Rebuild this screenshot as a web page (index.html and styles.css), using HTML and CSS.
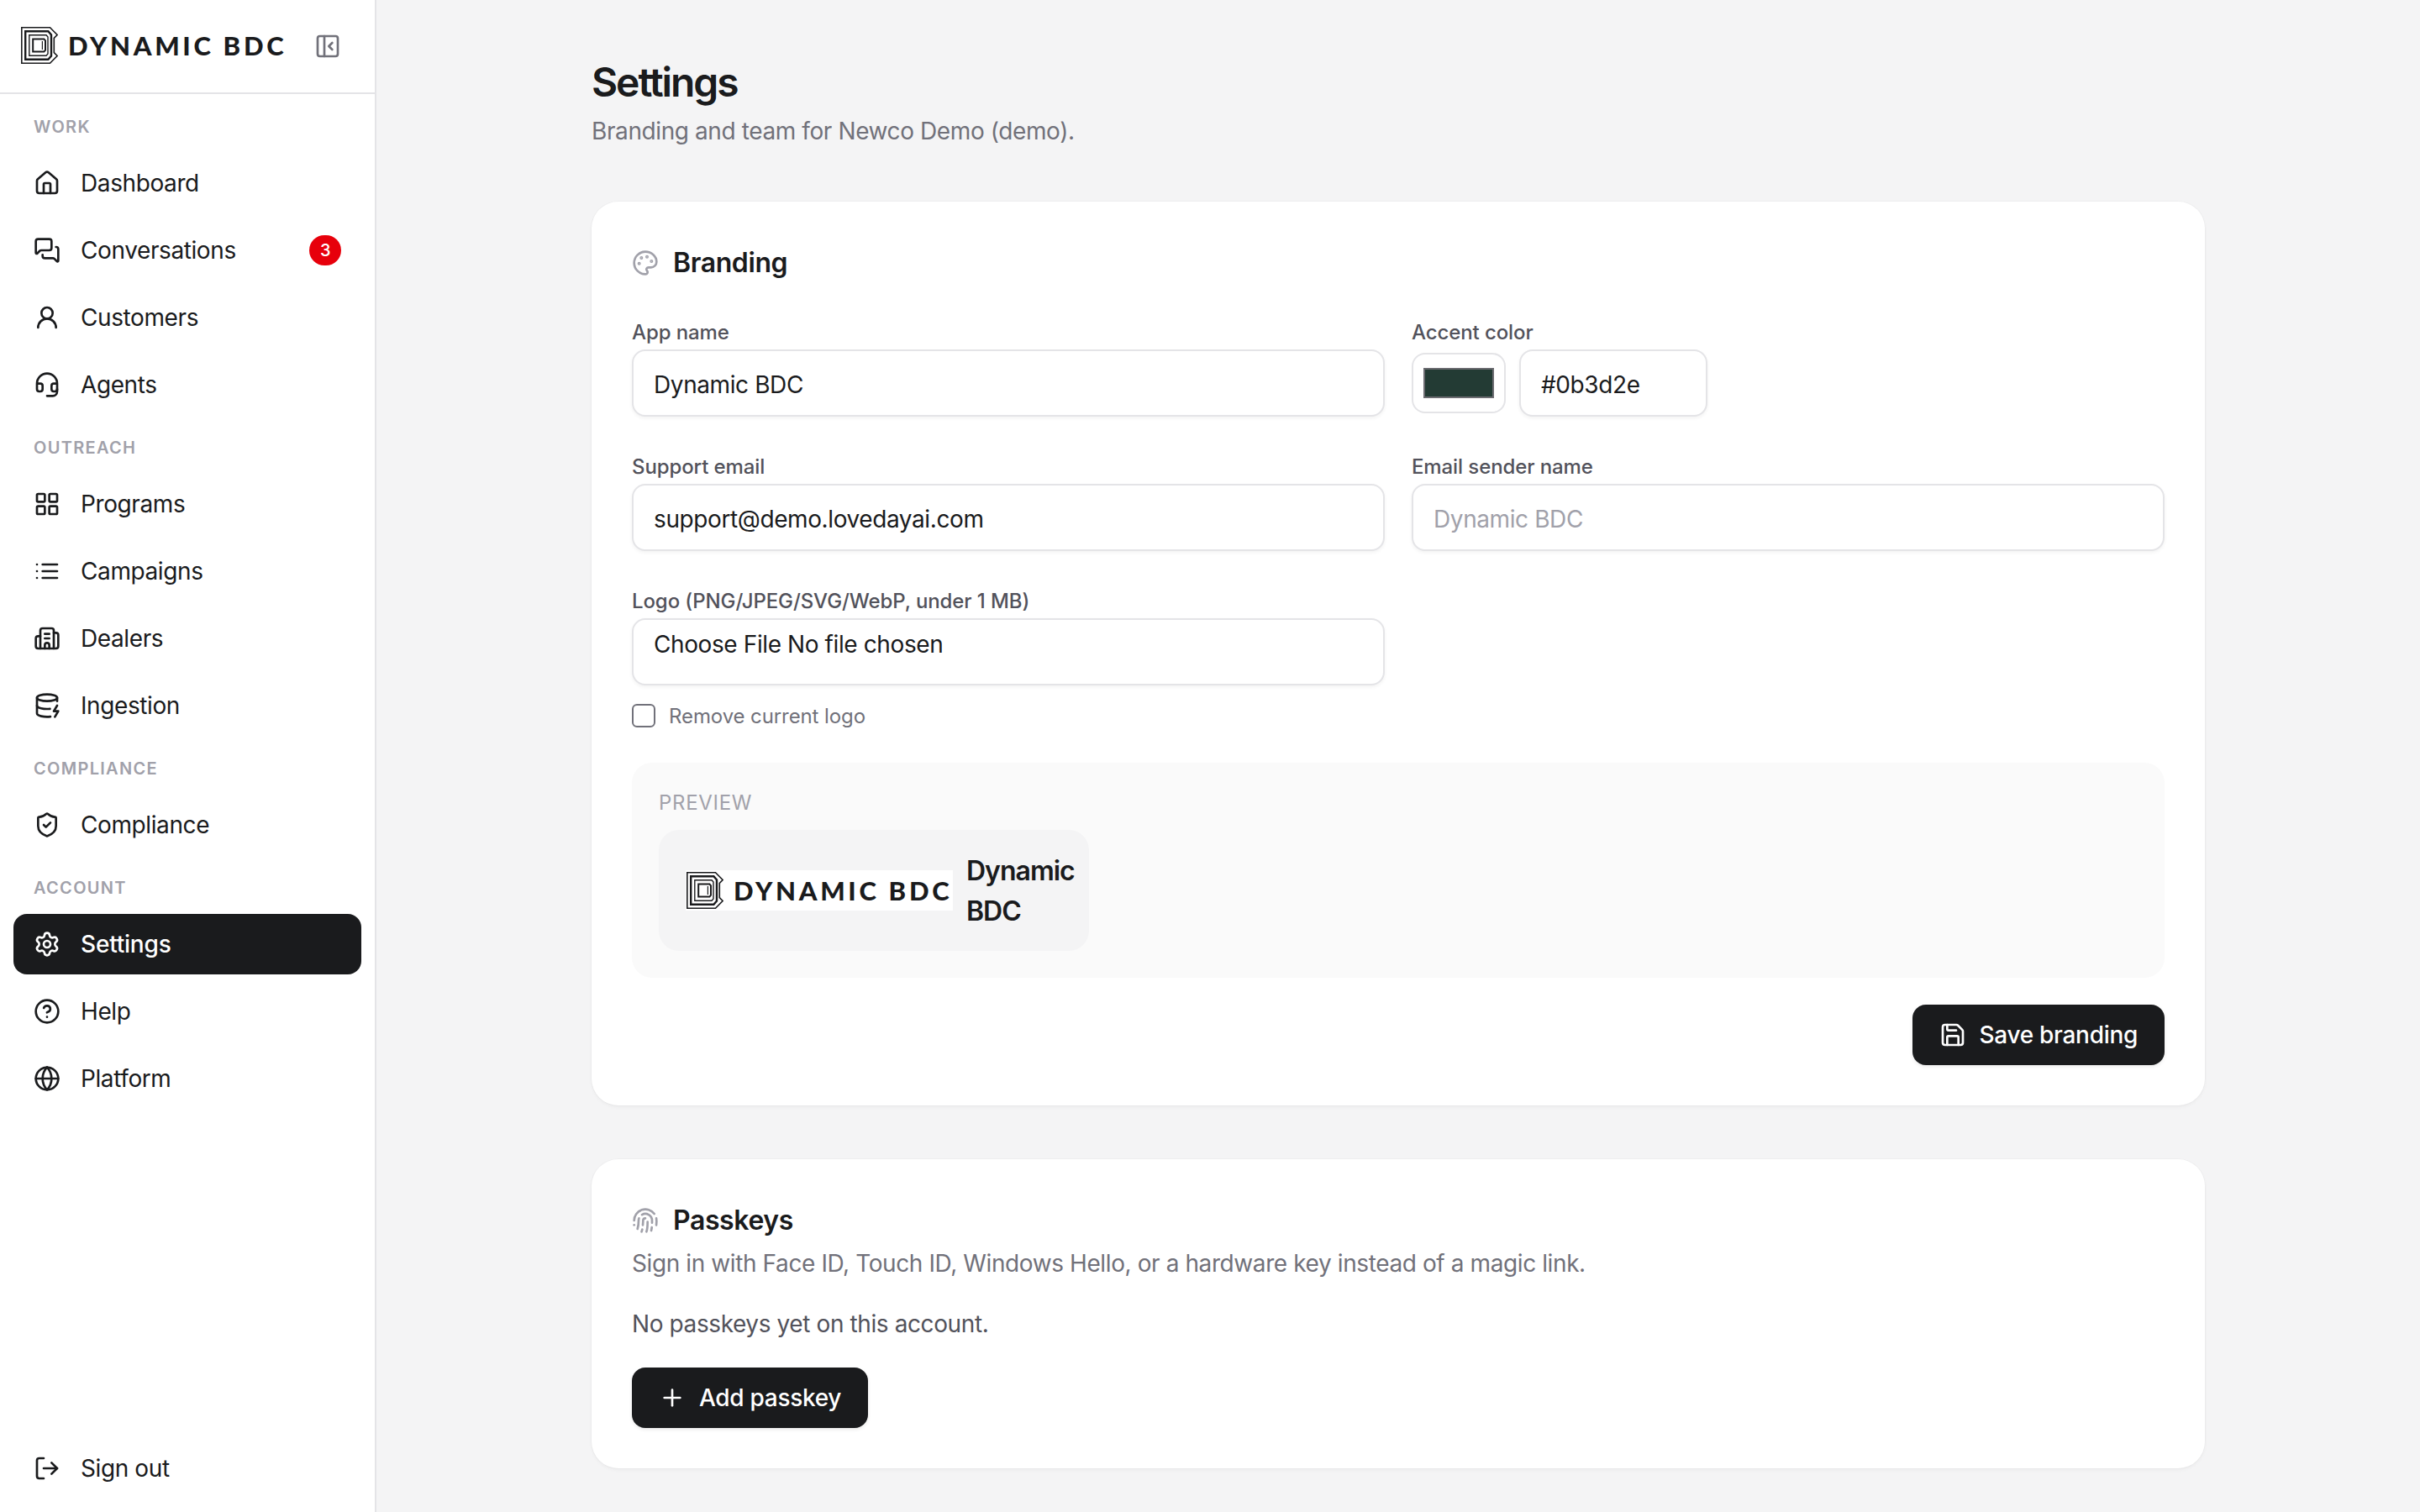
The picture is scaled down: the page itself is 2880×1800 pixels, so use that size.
FILE: index.html
```html
<!DOCTYPE html>
<html lang="en">
	<head>
		<meta charset="UTF-8" />
		<meta name="viewport" content="width=device-width, initial-scale=1.0" />
		<title>Settings</title>
		<link rel="stylesheet" href="styles.css">
	</head>
	<body>
		<!-- Icons -->
		<svg class="sprite" xmlns="http://www.w3.org/2000/svg">
			<symbol id="i-logo" viewBox="0 0 44 44">
				<path d="M.8 .8H34.5L43.1 9.5L39.3 13.4V30.6L43.1 34.5L34.5 43.2H.8Z" stroke-width="1.6" />
				<path d="M5.2 5.2H32.4L36 9.4V34.6L32.4 38.8H5.2Z" stroke-width="2.4" />
				<path d="M9.8 9.8H30L32 12V32L30 34.2H9.8Z" stroke-width="1.4" />
				<path d="M14.2 14.4H27.4L29 16.4V27.6L27.4 29.6H14.2Z" stroke-width="2" />
				<path d="M25.4 17V27" stroke-width="1.2" />
			</symbol>
			<symbol id="i-panel" viewBox="0 0 24 24">
				<rect width="18" height="18" x="3" y="3" rx="2" /><path d="M9 3v18" /><path d="m16 15-3-3 3-3" />
			</symbol>
			<symbol id="i-house" viewBox="0 0 24 24">
				<path d="M15 21v-8a1 1 0 0 0-1-1h-4a1 1 0 0 0-1 1v8" />
				<path d="M3 10a2 2 0 0 1 .709-1.528l7-5.999a2 2 0 0 1 2.582 0l7 5.999A2 2 0 0 1 21 10v9a2 2 0 0 1-2 2H5a2 2 0 0 1-2-2z" />
			</symbol>
			<symbol id="i-messages" viewBox="0 0 24 24">
				<path d="M16 10a2 2 0 0 1-2 2H6.828a2 2 0 0 0-1.414.586l-2.202 2.202A.71.71 0 0 1 2 14.286V4a2 2 0 0 1 2-2h10a2 2 0 0 1 2 2z" />
				<path d="M20 9a2 2 0 0 1 2 2v10.286a.71.71 0 0 1-1.212.502l-2.202-2.202A2 2 0 0 0 17.172 19H10a2 2 0 0 1-2-2v-1" />
			</symbol>
			<symbol id="i-user" viewBox="0 0 24 24">
				<circle cx="12" cy="8" r="5" /><path d="M20 21a8 8 0 0 0-16 0" />
			</symbol>
			<symbol id="i-headset" viewBox="0 0 24 24">
				<path d="M3 11h3a2 2 0 0 1 2 2v3a2 2 0 0 1-2 2H5a2 2 0 0 1-2-2v-5Zm0 0a9 9 0 1 1 18 0m0 0v5a2 2 0 0 1-2 2h-1a2 2 0 0 1-2-2v-3a2 2 0 0 1 2-2h3Z" />
				<path d="M21 16v2a4 4 0 0 1-4 4h-5" />
			</symbol>
			<symbol id="i-grid" viewBox="0 0 24 24">
				<rect width="7" height="7" x="3" y="3" rx="1" /><rect width="7" height="7" x="14" y="3" rx="1" />
				<rect width="7" height="7" x="14" y="14" rx="1" /><rect width="7" height="7" x="3" y="14" rx="1" />
			</symbol>
			<symbol id="i-list" viewBox="0 0 24 24">
				<path d="M3 12h.01" /><path d="M3 18h.01" /><path d="M3 6h.01" /><path d="M8 12h13" /><path d="M8 18h13" /><path d="M8 6h13" />
			</symbol>
			<symbol id="i-building" viewBox="0 0 24 24">
				<path d="M10 12h4" /><path d="M10 8h4" /><path d="M14 21v-3a2 2 0 0 0-4 0v3" />
				<path d="M6 10H4a2 2 0 0 0-2 2v7a2 2 0 0 0 2 2h16a2 2 0 0 0 2-2V9a2 2 0 0 0-2-2h-2" />
				<path d="M6 21V5a2 2 0 0 1 2-2h8a2 2 0 0 1 2 2v16" />
			</symbol>
			<symbol id="i-database" viewBox="0 0 24 24">
				<ellipse cx="12" cy="5" rx="9" ry="3" /><path d="M3 5V19A9 3 0 0 0 15 21.84" /><path d="M21 5V8" />
				<path d="M21 12L18 17H22L19 22" /><path d="M3 12A9 3 0 0 0 14.59 14.87" />
			</symbol>
			<symbol id="i-shield" viewBox="0 0 24 24">
				<path d="M20 13c0 5-3.5 7.5-7.66 8.95a1 1 0 0 1-.67-.01C7.5 20.5 4 18 4 13V6a1 1 0 0 1 1-1c2 0 4.5-1.2 6.24-2.72a1.17 1.17 0 0 1 1.52 0C14.51 3.81 17 5 19 5a1 1 0 0 1 1 1z" />
				<path d="m9 12 2 2 4-4" />
			</symbol>
			<symbol id="i-settings" viewBox="0 0 24 24">
				<path d="M9.671 4.136a2.34 2.34 0 0 1 4.659 0 2.34 2.34 0 0 0 3.319 1.915 2.34 2.34 0 0 1 2.33 4.033 2.34 2.34 0 0 0 0 3.831 2.34 2.34 0 0 1-2.33 4.033 2.34 2.34 0 0 0-3.319 1.915 2.34 2.34 0 0 1-4.659 0 2.34 2.34 0 0 0-3.32-1.915 2.34 2.34 0 0 1-2.33-4.033 2.34 2.34 0 0 0 0-3.831A2.34 2.34 0 0 1 6.35 6.051a2.34 2.34 0 0 0 3.319-1.915" />
				<circle cx="12" cy="12" r="3" />
			</symbol>
			<symbol id="i-help" viewBox="0 0 24 24">
				<circle cx="12" cy="12" r="10" /><path d="M9.09 9a3 3 0 0 1 5.83 1c0 2-3 3-3 3" /><path d="M12 17h.01" />
			</symbol>
			<symbol id="i-globe" viewBox="0 0 24 24">
				<circle cx="12" cy="12" r="10" /><path d="M12 2a14.5 14.5 0 0 0 0 20 14.5 14.5 0 0 0 0-20" /><path d="M2 12h20" />
			</symbol>
			<symbol id="i-logout" viewBox="0 0 24 24">
				<path d="m16 17 5-5-5-5" /><path d="M21 12H9" /><path d="M9 21H5a2 2 0 0 1-2-2V5a2 2 0 0 1 2-2h4" />
			</symbol>
			<symbol id="i-palette" viewBox="0 0 24 24">
				<path d="M12 22a1 1 0 0 1 0-20 10 9 0 0 1 10 9 5 5 0 0 1-5 5h-2.25a1.75 1.75 0 0 0-1.4 2.8l.3.4a1.75 1.75 0 0 1-1.4 2.8z" />
				<circle cx="13.5" cy="6.5" r=".5" fill="currentColor" /><circle cx="17.5" cy="10.5" r=".5" fill="currentColor" />
				<circle cx="6.5" cy="12.5" r=".5" fill="currentColor" /><circle cx="8.5" cy="7.5" r=".5" fill="currentColor" />
			</symbol>
			<symbol id="i-fingerprint" viewBox="0 0 24 24">
				<path d="M12 10a2 2 0 0 0-2 2c0 1.02-.1 2.51-.26 4" /><path d="M14 13.12c0 2.38 0 6.38-1 8.88" />
				<path d="M17.29 21.02c.12-.6.43-2.3.5-3.02" /><path d="M2 12a10 10 0 0 1 18-6" /><path d="M2 16h.01" />
				<path d="M21.8 16c.2-2 .131-5.354 0-6" /><path d="M5 19.5C5.5 18 6 15 6 12a6 6 0 0 1 .34-2" />
				<path d="M8.65 22c.21-.66.45-1.32.57-2" /><path d="M9 6.8a6 6 0 0 1 9 5.2v2" />
			</symbol>
			<symbol id="i-save" viewBox="0 0 24 24">
				<path d="M15.2 3a2 2 0 0 1 1.4.6l3.8 3.8a2 2 0 0 1 .6 1.4V19a2 2 0 0 1-2 2H5a2 2 0 0 1-2-2V5a2 2 0 0 1 2-2z" />
				<path d="M17 21v-7a1 1 0 0 0-1-1H8a1 1 0 0 0-1 1v7" /><path d="M7 3v4a1 1 0 0 0 1 1h7" />
			</symbol>
			<symbol id="i-plus" viewBox="0 0 24 24">
				<path d="M5 12h14" /><path d="M12 5v14" />
			</symbol>
		</svg>

		<!-- Sidebar: Begin -->
		<aside class="sidebar">
			<div class="sidebar-head">
				<div class="logo">
					<svg class="logo-mark"><use href="#i-logo" /></svg>
					<span class="logo-word">DYNAMIC BDC</span>
				</div>
				<button type="button" class="collapse"><svg class="icon"><use href="#i-panel" /></svg></button>
			</div>
			<nav class="nav">
				<div class="nav-group">
					<div class="nav-label">WORK</div>
					<a class="nav-item"><svg class="icon"><use href="#i-house" /></svg>Dashboard</a>
					<a class="nav-item"><svg class="icon"><use href="#i-messages" /></svg>Conversations<span class="badge">3</span></a>
					<a class="nav-item"><svg class="icon"><use href="#i-user" /></svg>Customers</a>
					<a class="nav-item"><svg class="icon"><use href="#i-headset" /></svg>Agents</a>
				</div>
				<div class="nav-group">
					<div class="nav-label">OUTREACH</div>
					<a class="nav-item"><svg class="icon"><use href="#i-grid" /></svg>Programs</a>
					<a class="nav-item"><svg class="icon"><use href="#i-list" /></svg>Campaigns</a>
					<a class="nav-item"><svg class="icon"><use href="#i-building" /></svg>Dealers</a>
					<a class="nav-item"><svg class="icon"><use href="#i-database" /></svg>Ingestion</a>
				</div>
				<div class="nav-group">
					<div class="nav-label">COMPLIANCE</div>
					<a class="nav-item"><svg class="icon"><use href="#i-shield" /></svg>Compliance</a>
				</div>
				<div class="nav-group">
					<div class="nav-label">ACCOUNT</div>
					<a class="nav-item active"><svg class="icon"><use href="#i-settings" /></svg>Settings</a>
					<a class="nav-item"><svg class="icon"><use href="#i-help" /></svg>Help</a>
					<a class="nav-item"><svg class="icon"><use href="#i-globe" /></svg>Platform</a>
				</div>
			</nav>
			<div class="sidebar-foot">
				<a class="nav-item"><svg class="icon"><use href="#i-logout" /></svg>Sign out</a>
			</div>
		</aside>
		<!-- Sidebar: End -->

		<main class="main">
			<header class="page-head">
				<h1>Settings</h1>
				<p class="page-sub">Branding and team for Newco Demo (demo).</p>
			</header>

			<!-- Branding: Begin -->
			<section class="card">
				<h2 class="card-title"><svg class="icon muted"><use href="#i-palette" /></svg>Branding</h2>
				<div class="form-grid">
					<div class="field">
						<label>App name</label>
						<input class="input" type="text" value="Dynamic BDC" />
					</div>
					<div class="field">
						<label>Accent color</label>
						<div class="color-row">
							<input class="color" type="color" value="#233b34" />
							<input class="input hex" type="text" value="#0b3d2e" />
						</div>
					</div>
					<div class="field">
						<label>Support email</label>
						<input class="input" type="text" value="support@demo.lovedayai.com" />
					</div>
					<div class="field">
						<label>Email sender name</label>
						<input class="input" type="text" placeholder="Dynamic BDC" />
					</div>
					<div class="field">
						<label>Logo (PNG/JPEG/SVG/WebP, under 1 MB)</label>
						<div class="input file">Choose File No file chosen</div>
					</div>
				</div>
				<label class="check"><input type="checkbox" />Remove current logo</label>
				<div class="preview">
					<div class="preview-label">PREVIEW</div>
					<div class="preview-box">
						<div class="logo logo-white">
							<svg class="logo-mark"><use href="#i-logo" /></svg>
							<span class="logo-word">DYNAMIC BDC</span>
						</div>
						<span class="preview-name">Dynamic BDC</span>
					</div>
				</div>
				<div class="card-actions">
					<button type="button" class="btn"><svg class="icon"><use href="#i-save" /></svg>Save branding</button>
				</div>
			</section>
			<!-- Branding: End -->

			<!-- Passkeys: Begin -->
			<section class="card">
				<h2 class="card-title"><svg class="icon muted"><use href="#i-fingerprint" /></svg>Passkeys</h2>
				<p class="card-sub">Sign in with Face ID, Touch ID, Windows Hello, or a hardware key instead of a magic link.</p>
				<p class="card-note">No passkeys yet on this account.</p>
				<button type="button" class="btn"><svg class="icon"><use href="#i-plus" /></svg>Add passkey</button>
			</section>
			<!-- Passkeys: End -->
		</main>
	</body>
</html>
```

FILE: styles.css
```css
* {
	box-sizing: border-box;
}

html,
body {
	margin: 0;
	height: 100%;
}

body {
	display: flex;
	overflow: hidden;
	background-color: #f4f4f5;
	color: #1a1b1d;
	font-family: "Inter", "Liberation Sans", sans-serif;
	font-size: 28px;
	letter-spacing: -0.4px;
}

.sprite {
	display: none;
}

.icon {
	flex: none;
	width: 32px;
	height: 32px;
	fill: none;
	stroke: currentColor;
	stroke-width: 2;
	stroke-linecap: round;
	stroke-linejoin: round;
}

.icon.muted {
	color: #a1a1aa;
}

/* Sidebar */
.sidebar {
	flex: none;
	display: flex;
	flex-direction: column;
	width: 448px;
	height: 100%;
	background-color: #fff;
	border-right: 2px solid #e4e4e7;
}

.sidebar-head {
	display: flex;
	align-items: center;
	justify-content: space-between;
	height: 112px;
	padding: 0 40px 2px 24px;
	border-bottom: 2px solid #e4e4e7;
}

.logo {
	display: flex;
	align-items: center;
	gap: 12px;
	width: 318px;
	height: 48px;
}

.logo-white {
	flex: none;
	background-color: #fff;
}

.logo-mark {
	flex: none;
	width: 44px;
	height: 44px;
	margin-left: 1px;
	fill: none;
	stroke: #1a1b1d;
	stroke-linejoin: miter;
}

.logo-word {
	font-family: "Lato", "Liberation Sans", sans-serif;
	font-size: 31px;
	font-weight: 900;
	letter-spacing: 3.7px;
	white-space: nowrap;
	color: #1a1b1d;
}

.collapse {
	display: flex;
	margin-top: 2px;
	padding: 0;
	border: 0;
	background: none;
	color: #71717a;
}

.nav {
	flex: 1;
	display: flex;
	flex-direction: column;
	gap: 24px;
	padding: 24px 16px 0;
}

.nav-group {
	display: flex;
	flex-direction: column;
	gap: 8px;
}

.nav-label {
	margin-bottom: 8px;
	padding-left: 24px;
	font-size: 20px;
	font-weight: 600;
	line-height: 30px;
	letter-spacing: 1.3px;
	color: #a1a1aa;
}

.nav-item {
	display: flex;
	align-items: center;
	gap: 24px;
	height: 72px;
	padding: 0 24px;
	border-radius: 16px;
	color: #1a1b1d;
}

.nav-item.active {
	background-color: #1a1b1d;
	color: #fff;
	font-weight: 500;
	letter-spacing: -0.2px;
}

.badge {
	margin-left: auto;
	width: 38px;
	height: 36px;
	border-radius: 18px;
	background-color: #e7000b;
	color: #fff;
	font-size: 20px;
	font-weight: 500;
	line-height: 36px;
	text-align: center;
}

.sidebar-foot {
	padding: 0 16px 16px;
}

/* Main */
.main {
	flex: 1;
	display: flex;
	flex-direction: column;
	gap: 64px;
	height: 100%;
	padding: 64px 256px 0;
}

h1 {
	margin: 0;
	font-size: 48px;
	font-weight: 600;
	line-height: 68px;
	letter-spacing: -2.1px;
}

.page-sub {
	margin: 4px 0 0;
	line-height: 40px;
	color: #71717a;
}

.card {
	padding: 48px;
	border-radius: 32px;
	background-color: #fff;
	box-shadow: 0 0 0 1px rgba(0, 0, 0, 0.02), 0 2px 4px rgba(0, 0, 0, 0.04);
}

.card-title {
	display: flex;
	align-items: center;
	gap: 17px;
	height: 48px;
	margin: 0;
	padding-top: 1px;
	font-size: 32px;
	font-weight: 600;
	letter-spacing: -0.4px;
}

.form-grid {
	display: grid;
	grid-template-columns: 1fr 1fr;
	gap: 40px 32px;
	margin-top: 40px;
}

.field label {
	display: block;
	height: 40px;
	padding-top: 2px;
	font-size: 24px;
	font-weight: 500;
	line-height: 36px;
	letter-spacing: -0.1px;
	color: #52525b;
}

.input {
	display: block;
	width: 100%;
	height: 80px;
	padding: 4px 24px 0;
	border: 2px solid #e4e4e7;
	border-radius: 16px;
	background-color: #fff;
	box-shadow: 0 2px 4px rgba(0, 0, 0, 0.05);
	color: #1a1b1d;
	font-family: inherit;
	font-size: 28px;
	letter-spacing: -0.4px;
}

.input::placeholder {
	color: #a1a1aa;
}

.input.file {
	padding-top: 12px;
	line-height: 34px;
}

.color-row {
	display: flex;
	align-items: center;
	gap: 16px;
}

.color {
	flex: none;
	width: 112px;
	height: 72px;
	padding: 0;
	border: 2px solid #e4e4e7;
	border-radius: 16px;
	background-color: #fff;
}

.color::-webkit-color-swatch-wrapper {
	padding: 16px 12px;
}

.color::-webkit-color-swatch {
	border: 2px solid #6b6b70;
	border-radius: 0;
}

.input.hex {
	width: 224px;
}

.check {
	display: flex;
	align-items: center;
	gap: 16px;
	height: 40px;
	margin-top: 16px;
	font-size: 24px;
	letter-spacing: -0.1px;
	color: #71717a;
}

.check input {
	appearance: none;
	flex: none;
	width: 28px;
	height: 28px;
	margin: 0;
	border: 2px solid #71717a;
	border-radius: 6px;
}

.preview {
	margin-top: 36px;
	padding: 32px;
	border-radius: 24px;
	background-color: #fafafa;
}

.preview-label {
	margin-bottom: 16px;
	font-size: 24px;
	line-height: 32px;
	letter-spacing: 0.7px;
	color: #a1a1aa;
}

.preview-box {
	display: flex;
	align-items: center;
	gap: 16px;
	width: 512px;
	height: 144px;
	padding: 0 16px 0 32px;
	border-radius: 24px;
	background-color: #f4f4f5;
}

.preview-name {
	padding-top: 2px;
	font-size: 32px;
	font-weight: 600;
	line-height: 48px;
	letter-spacing: -1px;
}

.card-actions {
	display: flex;
	justify-content: flex-end;
	margin-top: 32px;
}

.btn {
	display: inline-flex;
	align-items: center;
	gap: 16px;
	height: 72px;
	padding: 0 32px;
	border: 0;
	border-radius: 16px;
	background-color: #1a1b1d;
	box-shadow: 0 2px 4px rgba(0, 0, 0, 0.08);
	color: #fff;
	font-family: inherit;
	font-size: 28px;
	font-weight: 500;
	letter-spacing: -0.3px;
}

.card-sub {
	margin: 8px 0 0;
	line-height: 40px;
	color: #71717a;
}

.card-note {
	margin: 32px 0;
	line-height: 40px;
	color: #52525b;
}
```
